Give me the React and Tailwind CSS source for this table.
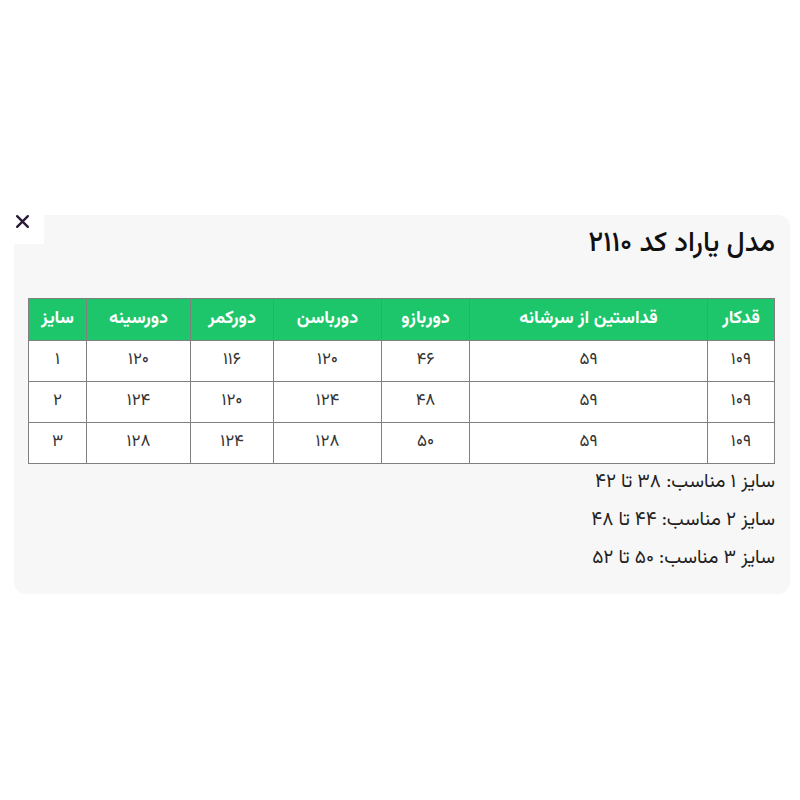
import React from "react";

const headers = [
  { label: "قدکار", w: "w-[67px]" },
  { label: "قداستین از سرشانه", w: "w-[238px]" },
  { label: "دوربازو", w: "w-[88px]" },
  { label: "دورباسن", w: "w-[108px]" },
  { label: "دورکمر", w: "w-[83px]" },
  { label: "دورسینه", w: "w-[104px]" },
  { label: "سایز", w: "w-[58px]" },
];

const rows = [
  ["۱۰۹", "۵۹", "۴۶", "۱۲۰", "۱۱۶", "۱۲۰", "۱"],
  ["۱۰۹", "۵۹", "۴۸", "۱۲۴", "۱۲۰", "۱۲۴", "۲"],
  ["۱۰۹", "۵۹", "۵۰", "۱۲۸", "۱۲۴", "۱۲۸", "۳"],
];

const notes = [
  "سایز ۱ مناسب: ۳۸ تا ۴۲",
  "سایز ۲ مناسب: ۴۴ تا ۴۸",
  "سایز ۳ مناسب: ۵۰ تا ۵۲",
];

const font = {
  fontFamily: '"Vazirmatn", "Noto Sans Arabic", "DejaVu Sans", sans-serif',
};

export default function App() {
  return (
    <div className="relative h-[800px] w-[800px] bg-white" style={font}>
      {/* close button */}
      <div className="absolute left-0 top-[200px] z-10 flex h-[44px] w-[44px] items-center justify-center bg-white">
        <svg width="15" height="15" viewBox="0 0 14 14" className="-mt-[1px]">
          <path d="M2 2 L12 12 M12 2 L2 12" stroke="#2a1a3a" strokeWidth="2.2" strokeLinecap="round" />
        </svg>
      </div>

      <div dir="rtl" className="ml-[14px] mr-[10px] pt-[215px]">
        <div className="rounded-xl bg-[#f7f7f7] pl-[15px] pr-[15px] pt-[12px] pb-[22px]">
          <h2 className="text-[28px] font-medium leading-[34px] text-[#111]">مدل یاراد کد ۲۱۱۰</h2>

          <table className="mt-[37px] w-[746px] table-fixed border-collapse text-[17px] text-[#333]">
            <thead>
              <tr className="bg-[#1dc66a] text-white">
                {headers.map((h) => (
                  <th
                    key={h.label}
                    className={`${h.w} h-[42px] border border-[#808080] text-[18px] font-bold text-center`}
                  >
                    {h.label}
                  </th>
                ))}
              </tr>
            </thead>
            <tbody className="bg-white">
              {rows.map((r, i) => (
                <tr key={i}>
                  {r.map((c, j) => (
                    <td key={j} className="h-[41px] border border-[#808080] text-center">
                      {c}
                    </td>
                  ))}
                </tr>
              ))}
            </tbody>
          </table>

          <div className="mt-[6px] flex flex-col gap-[12px] text-[19px] leading-[26px] text-[#222]">
            {notes.map((n) => (
              <p key={n}>{n}</p>
            ))}
          </div>
        </div>
      </div>
    </div>
  );
}
